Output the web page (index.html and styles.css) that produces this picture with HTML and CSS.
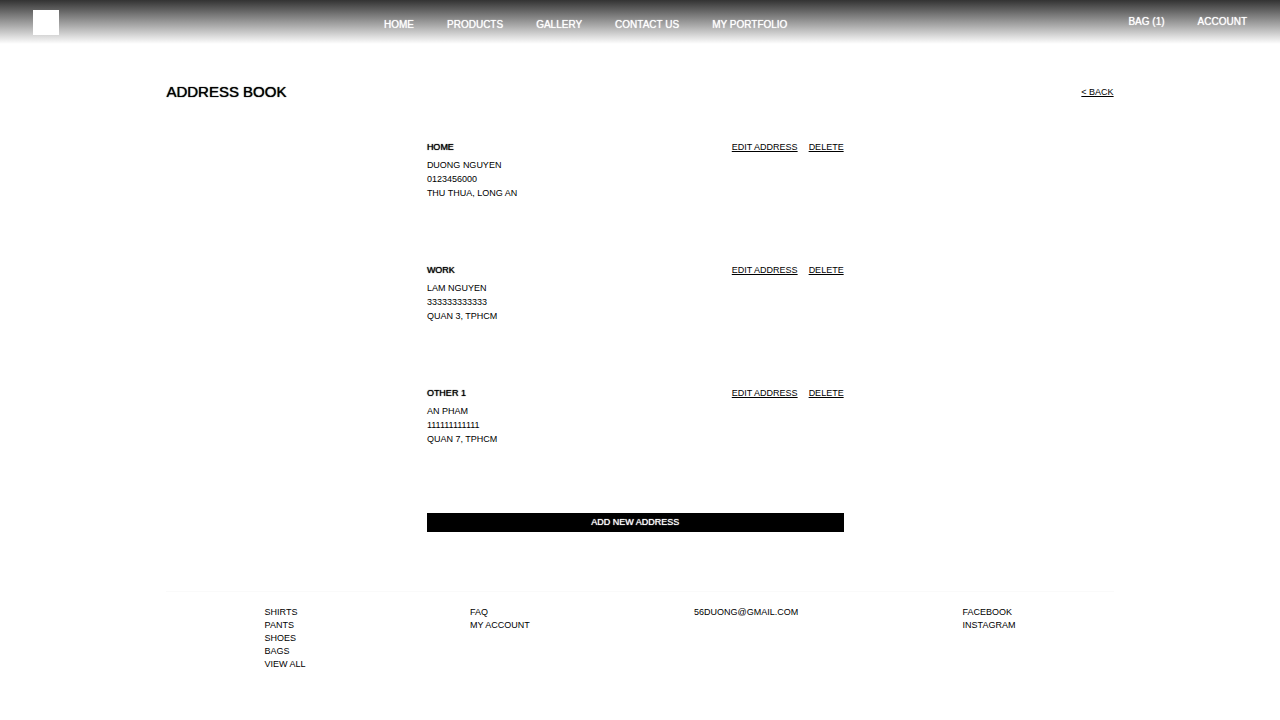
FILE: index.html
```html
<!DOCTYPE html>
<html lang="en">
<head>
<meta charset="utf-8">
<meta name="viewport" content="width=device-width, initial-scale=1">
<title>Address Book</title>
<link rel="stylesheet" href="styles.css">
</head>
<body>
<header class="header">
  <a class="logo" href="#" aria-label="Store home"></a>
  <nav class="nav">
    <a href="#">HOME</a>
    <a href="#">PRODUCTS</a>
    <a href="#">GALLERY</a>
    <a href="#">CONTACT US</a>
    <a href="#">MY PORTFOLIO</a>
  </nav>
  <div class="user-links">
    <a href="#">BAG (1)</a>
    <a href="#">ACCOUNT</a>
  </div>
</header>
<main class="main">
  <div class="page-head">
    <h1 class="page-title">ADDRESS BOOK</h1>
    <a class="link" href="#">&lt; BACK</a>
  </div>
  <div class="addresses">
    <section class="address">
      <div class="address-info">
        <h2 class="address-name">HOME</h2>
        <p>DUONG NGUYEN</p>
        <p>0123456000</p>
        <p>THU THUA, LONG AN</p>
      </div>
      <div class="actions"><a class="link" href="#">EDIT ADDRESS</a><a class="link" href="#">DELETE</a></div>
    </section>
    <section class="address">
      <div class="address-info">
        <h2 class="address-name">WORK</h2>
        <p>LAM NGUYEN</p>
        <p>333333333333</p>
        <p>QUAN 3, TPHCM</p>
      </div>
      <div class="actions"><a class="link" href="#">EDIT ADDRESS</a><a class="link" href="#">DELETE</a></div>
    </section>
    <section class="address">
      <div class="address-info">
        <h2 class="address-name">OTHER 1</h2>
        <p>AN PHAM</p>
        <p>111111111111</p>
        <p>QUAN 7, TPHCM</p>
      </div>
      <div class="actions"><a class="link" href="#">EDIT ADDRESS</a><a class="link" href="#">DELETE</a></div>
    </section>
    <button class="add-button" type="button">ADD NEW ADDRESS</button>
  </div>
</main>
<footer class="footer">
  <ul class="footer-list">
    <li><a href="#">SHIRTS</a></li>
    <li><a href="#">PANTS</a></li>
    <li><a href="#">SHOES</a></li>
    <li><a href="#">BAGS</a></li>
    <li><a href="#">VIEW ALL</a></li>
  </ul>
  <ul class="footer-list">
    <li><a href="#">FAQ</a></li>
    <li><a href="#">MY ACCOUNT</a></li>
  </ul>
  <ul class="footer-list">
    <li><a href="#">56DUONG@GMAIL.COM</a></li>
  </ul>
  <ul class="footer-list">
    <li><a href="#">FACEBOOK</a></li>
    <li><a href="#">INSTAGRAM</a></li>
  </ul>
</footer>
</body>
</html>
```
FILE: styles.css
```css
* {
  box-sizing: border-box;
}

body {
  margin: 0;
  background: #fff;
  color: #000;
  font-family: "Liberation Sans", Arial, sans-serif;
  font-size: 9px;
  line-height: 14px;
}

h1, h2, p, ul {
  margin: 0;
  padding: 0;
}

a {
  color: inherit;
  text-decoration: none;
}

/* A medium weight, between regular and bold */
.header,
.page-title,
.address-name,
.add-button {
  font-weight: normal;
  text-shadow: 0 0 1px currentColor;
}

.header {
  display: flex;
  align-items: flex-start;
  padding: 10px 33px 9px;
  background: linear-gradient(#333, #fff);
  color: #fff;
  font-size: 10px;
}

.logo {
  width: 26px;
  height: 25px;
  background: #fff;
}

.nav {
  display: flex;
  flex: 1;
  justify-content: center;
  gap: 33px;
  padding: 8px 16px 0 0;
}

.user-links {
  display: flex;
  gap: 33px;
  padding-top: 5px;
}

.main {
  padding: 36px 13% 0;
}

.page-head {
  display: flex;
  align-items: center;
  justify-content: space-between;
}

.page-title {
  font-size: 15px;
  line-height: 24px;
}

.link {
  text-decoration: underline;
}

.addresses {
  width: 44%;
  margin: 36px 0 0 27.5%;
}

.address {
  display: flex;
  justify-content: space-between;
  padding-bottom: 63px;
}

.address-name {
  margin-bottom: 4px;
  font-size: 9px;
  line-height: 14px;
}

.actions {
  display: flex;
  gap: 11px;
}

.add-button {
  display: block;
  width: 100%;
  margin-top: 4px;
  padding: 2px 0 3px;
  border: 0;
  background: #000;
  color: #fff;
  font-family: inherit;
  font-size: 9px;
  line-height: 14px;
}

.footer {
  display: flex;
  justify-content: space-around;
  margin: 59px 13% 0;
  padding: 14px 16px 24px;
  border-top: 1px solid #fafafa;
  line-height: 13px;
}

.footer-list {
  list-style: none;
}
```
